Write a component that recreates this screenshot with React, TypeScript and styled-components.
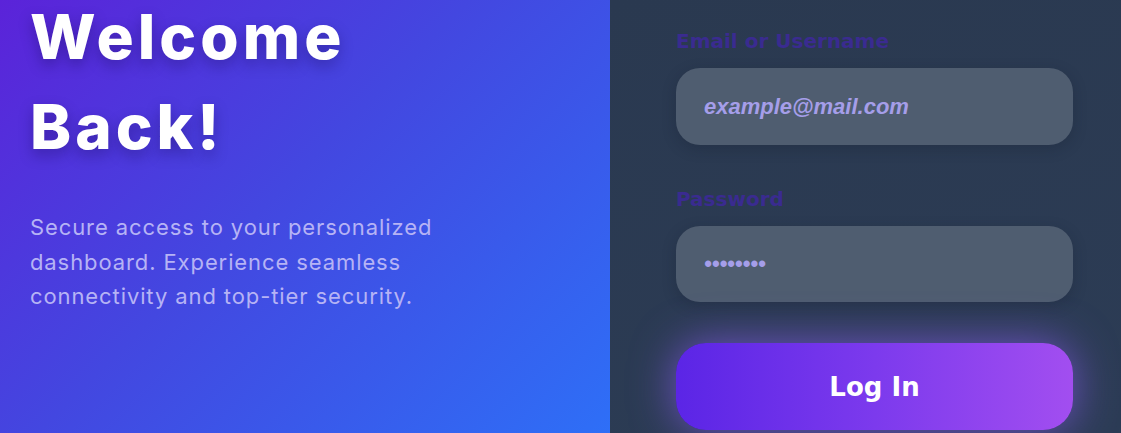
import React from 'react';
import { createGlobalStyle, styled } from 'styled-components';

const GlobalStyle = createGlobalStyle`
  * { box-sizing: border-box; }
  html, body { margin: 0; padding: 0; background: #2b3a52; }
  body { font-family: 'Inter', 'Noto Sans', sans-serif; overflow: hidden; }
`;

const Shell = styled.div`
  display: grid;
  grid-template-columns: 610px 1fr;
  height: 433px;
  overflow: hidden;
`;

const Hero = styled.section`
  background: linear-gradient(135deg, #5b23d9 0%, #4347e0 45%, #2e6ff7 100%);
  padding: 0 30px;
  display: flex;
  flex-direction: column;
`;

const Title = styled.h1`
  margin: -8px 0 0;
  font-family: 'Inter', sans-serif;
  font-weight: 800;
  font-size: 62px;
  line-height: 90px;
  letter-spacing: 4px;
  color: #ffffff;
  text-shadow: 0 6px 14px rgba(20, 10, 80, 0.35);
`;

const Lead = styled.p`
  margin: 38px 0 0;
  max-width: 440px;
  font-family: 'Inter', sans-serif;
  font-size: 22px;
  line-height: 34.5px;
  letter-spacing: 0.9px;
  color: #b6b3f5;
`;

const Side = styled.section`
  background: linear-gradient(160deg, #2a3950 0%, #2c3c55 100%);
  padding: 28px 0 0 66px;
`;

const Form = styled.form`
  width: 397px;
  display: flex;
  flex-direction: column;
`;

const Field = styled.div`
  display: flex;
  flex-direction: column;
  margin-bottom: 41px;
`;

const Label = styled.label`
  font-family: 'DejaVu Sans', sans-serif;
  font-weight: 700;
  font-size: 20px;
  line-height: 27px;
  color: #3a2b90;
  margin-bottom: 13px;
`;

const Input = styled.input<{ $h: number }>`
  height: ${({ $h }) => $h}px;
  border: none;
  outline: none;
  border-radius: 24px;
  background: #4f5d70;
  padding: 0 28px;
  font-family: 'Liberation Sans', Arial, sans-serif;
  font-style: italic;
  font-weight: 700;
  font-size: 22px;
  color: #a59ee9;
  box-shadow: 0 4px 14px rgba(20, 28, 45, 0.25);
`;

const Submit = styled.button`
  height: 87px;
  border: none;
  border-radius: 30px;
  background: linear-gradient(90deg, #5b25e6 0%, #7c3aed 50%, #a24ef0 100%);
  box-shadow: 0 0 44px rgba(139, 92, 246, 0.7);
  color: #ffffff;
  font-family: 'DejaVu Sans', sans-serif;
  font-weight: 700;
  font-size: 26px;
  cursor: pointer;
`;

export default function App() {
  return (
    <>
      <GlobalStyle />
      <Shell>
        <Hero>
          <Title>
            Welcome
            <br />
            Back!
          </Title>
          <Lead>
            Secure access to your personalized dashboard. Experience seamless
            connectivity and top-tier security.
          </Lead>
        </Hero>
        <Side>
          <Form onSubmit={(e) => e.preventDefault()}>
            <Field>
              <Label htmlFor="user">Email or Username</Label>
              <Input id="user" type="text" $h={77} defaultValue="example@mail.com" readOnly />
            </Field>
            <Field>
              <Label htmlFor="pass">Password</Label>
              <Input id="pass" type="password" $h={76} defaultValue="password" readOnly />
            </Field>
            <Submit type="submit">Log In</Submit>
          </Form>
        </Side>
      </Shell>
    </>
  );
}
